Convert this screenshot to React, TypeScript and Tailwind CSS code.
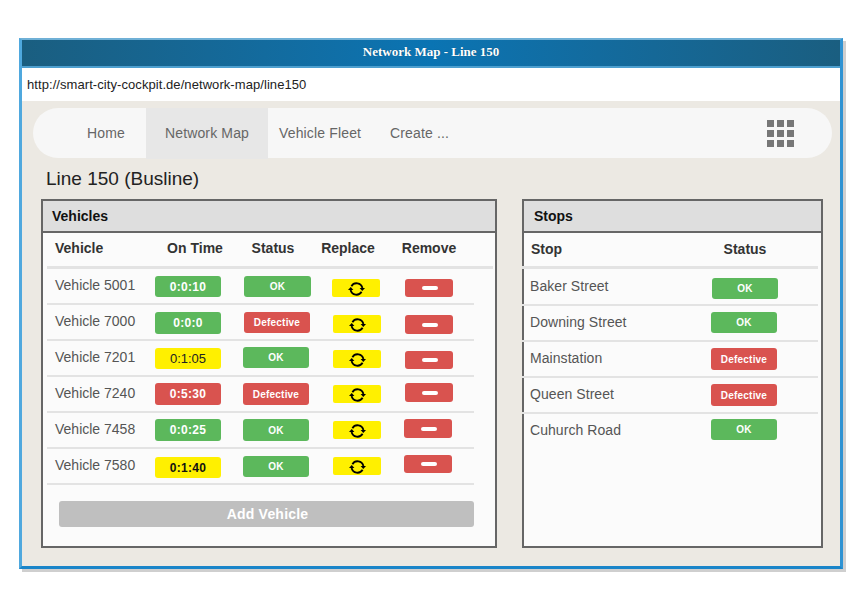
const GREEN = "bg-[#5cb85c]";
const RED = "bg-[#d9534f]";

const vehicles = [
  {
    name: "Vehicle 5001",
    time: "0:0:10",
    timeClass: "bg-[#5cb85c] text-white font-bold text-[12px] tracking-[0.3px] mt-[7px] h-[21px]",
    status: "OK",
    statusClass: "bg-[#5cb85c] ml-[23px] mt-[7px] w-[67px] h-[21px]",
    replaceClass: "ml-[21px] mt-[10px]",
    removeClass: "ml-[25px] mt-[10px] h-[18px]",
  },
  {
    name: "Vehicle 7000",
    time: "0:0:0",
    timeClass: "bg-[#5cb85c] text-white font-bold text-[12px] tracking-[0.3px] mt-[7px] h-[22px]",
    status: "Defective",
    statusClass: "bg-[#d9534f] ml-[23px] mt-[7px] w-[66px] h-[21px]",
    replaceClass: "ml-[23px] mt-[10px]",
    removeClass: "ml-[24px] mt-[10px] h-[19px]",
  },
  {
    name: "Vehicle 7201",
    time: "0:1:05",
    timeClass: "bg-[#fff000] text-[#222] text-[13px] mt-[7px] h-[21px]",
    status: "OK",
    statusClass: "bg-[#5cb85c] ml-[22px] mt-[6px] w-[66px] h-[21px]",
    replaceClass: "ml-[24px] mt-[9px]",
    removeClass: "ml-[24px] mt-[10px] h-[18px]",
  },
  {
    name: "Vehicle 7240",
    time: "0:5:30",
    timeClass: "bg-[#d9534f] text-white font-bold text-[12px] tracking-[0.3px] mt-[6px] h-[22px]",
    status: "Defective",
    statusClass: "bg-[#d9534f] ml-[22px] mt-[6px] w-[66px] h-[22px]",
    replaceClass: "ml-[24px] mt-[8px]",
    removeClass: "ml-[24px] mt-[6px] h-[19px]",
  },
  {
    name: "Vehicle 7458",
    time: "0:0:25",
    timeClass: "bg-[#5cb85c] text-white font-bold text-[12px] tracking-[0.3px] mt-[6px] h-[22px]",
    status: "OK",
    statusClass: "bg-[#5cb85c] ml-[22px] mt-[6px] w-[66px] h-[22px]",
    replaceClass: "ml-[24px] mt-[8px]",
    removeClass: "ml-[23px] mt-[6px] h-[19px]",
  },
  {
    name: "Vehicle 7580",
    time: "0:1:40",
    timeClass: "bg-[#fff000] text-[#111] font-bold text-[12px] tracking-[0.3px] mt-[8px] h-[21px]",
    status: "OK",
    statusClass: "bg-[#5cb85c] ml-[22px] mt-[7px] w-[66px] h-[21px]",
    replaceClass: "ml-[24px] mt-[8px]",
    removeClass: "ml-[23px] mt-[6px] h-[18px]",
  },
];

const stops = [
  { name: "Baker Street", status: "OK", rowClass: "h-[37px] border-b-2", nameClass: "pt-[7px]", chipClass: `${GREEN} ml-[182px] mt-[9px] h-[21px]` },
  { name: "Downing Street", status: "OK", rowClass: "h-[36px] border-b-2", nameClass: "pt-[6px]", chipClass: `${GREEN} ml-[181px] mt-[6px] h-[21px]` },
  { name: "Mainstation", status: "Defective", rowClass: "h-[36px] border-b-2", nameClass: "pt-[6px]", chipClass: `${RED} ml-[181px] mt-[6px] h-[22px]` },
  { name: "Queen Street", status: "Defective", rowClass: "h-[36px] border-b-2", nameClass: "pt-[6px]", chipClass: `${RED} ml-[181px] mt-[6px] h-[22px]` },
  { name: "Cuhurch Road", status: "OK", rowClass: "h-[36px]", nameClass: "pt-[6px]", chipClass: `${GREEN} ml-[181px] mt-[5px] h-[21px]` },
];

function RefreshIcon() {
  return (
    <svg width="17" height="16" viewBox="0 0 17 16" fill="none" className="mt-[1px]">
      <path d="M3.4 5.2A6 6 0 0 1 14.4 7" stroke="#000" strokeWidth="1.8" />
      <path d="M13.6 10.8A6 6 0 0 1 2.6 9" stroke="#000" strokeWidth="1.8" />
      <path d="M11.6 7h5.4l-2.7 3z" fill="#000" />
      <path d="M0 9h5.4l-2.7-3z" fill="#000" />
    </svg>
  );
}

function StatusChip({ label, className }: { label: string; className: string }) {
  return (
    <div className={`flex items-center justify-center rounded-[3px] text-white text-[10px] font-bold tracking-[0.2px] ${className}`}>
      {label}
    </div>
  );
}

function PanelTitle({ title, className }: { title: string; className: string }) {
  return (
    <div className={`h-[32px] shrink-0 bg-[#dedede] border-b-2 border-[#666] text-[14px] font-bold leading-[30px] text-[#111] ${className}`}>
      {title}
    </div>
  );
}

export default function App() {
  return (
    <div className="w-[854px] h-[604px] bg-white pt-[38px] pl-[19px] overflow-hidden font-['Liberation_Sans',Arial,sans-serif]">
      <div className="w-[824px] h-[531px] flex flex-col bg-[#ece9e3] border-[3px] border-t-2 border-t-[#6fb0d6] border-l-[#4fa8de] border-r-[#2f93d3] border-b-[#1a85c9] shadow-[3px_3px_0_#cfcfcf]">
        <div className="h-[28px] shrink-0 flex items-center justify-center pb-[2px] bg-gradient-to-r from-[#1a5e80] via-[#0a74b3] to-[#1a5e80] border-b-2 border-[#4d9fcf] text-white text-[13px] font-bold font-['Liberation_Serif',serif] [text-shadow:0_0_1px_#0005]">
          Network Map - Line 150
        </div>
        <div className="h-[33px] shrink-0 bg-white pl-[5px] text-[13px] leading-[34px] tracking-[0.07px] text-[#222]">
          http://smart-city-cockpit.de/network-map/line150
        </div>

        <div className="ml-[11px] mt-[7px] w-[799px] h-[50px] shrink-0 flex items-start rounded-[25px] bg-[#f7f7f7] text-[14px] tracking-[0.15px] text-[#666]">
          <div className="ml-[54px] w-[59px] leading-[50px]">Home</div>
          <div className="w-[122px] h-[51px] bg-[#e7e7e7] text-center leading-[50px]">Network Map</div>
          <div className="ml-[11px] w-[111px] leading-[50px]">Vehicle Fleet</div>
          <div className="leading-[50px]">Create ...</div>
          <div className="ml-[318px] mt-[12px] grid grid-cols-[7px_7px_7px] gap-[3px]">
            {[0, 1, 2, 3, 4, 5, 6, 7, 8].map((n) => (
              <div key={n} className="w-[7px] h-[7px] bg-[#777]" />
            ))}
          </div>
        </div>

        <div className="ml-[24px] mt-[8px] h-[26px] shrink-0 text-[19px] leading-[26px] text-[#222]">Line 150 (Busline)</div>

        <div className="ml-[19px] mt-[7px] flex gap-[25px]">
          <div className="w-[456px] h-[349px] flex flex-col border-2 border-[#666] bg-[#fbfbfb]">
            <PanelTitle title="Vehicles" className="pl-[9px]" />
            <div className="ml-[4px] w-[446px] h-[36px] shrink-0 flex items-start border-b-[3px] border-[#e3e3e3] text-[14px] font-bold leading-[30px] text-[#333]">
              <div className="ml-[8px] w-[95px]">Vehicle</div>
              <div className="w-[90px] text-center">On Time</div>
              <div className="w-[66px] text-center">Status</div>
              <div className="ml-[2px] w-[80px] text-center">Replace</div>
              <div className="w-[82px] text-center">Remove</div>
            </div>
            {vehicles.map((v) => (
              <div key={v.name} className="ml-[4px] w-[427px] h-[36px] shrink-0 flex items-start border-b-2 border-[#e3e3e3]">
                <div className="w-[108px] pl-[8px] pt-[6px] text-[14px] leading-5 text-[#555]">{v.name}</div>
                <div className={`w-[66px] flex items-center justify-center rounded-[3px] ${v.timeClass}`}>{v.time}</div>
                <StatusChip label={v.status} className={v.statusClass} />
                <div className={`w-[48px] h-[18px] flex items-center justify-center rounded-[2px] bg-[#fff000] ${v.replaceClass}`}>
                  <RefreshIcon />
                </div>
                <div className={`w-[48px] flex items-center justify-center rounded-[3px] bg-[#d9534f] ${v.removeClass}`}>
                  <div className="ml-[1px] w-[16px] h-[4px] rounded-[2px] bg-white" />
                </div>
              </div>
            ))}
            <div className="ml-[16px] mt-[16px] w-[415px] h-[26px] shrink-0 flex items-center justify-center pl-[2px] rounded-[3px] bg-[#bfbfbf] text-[14px] font-bold tracking-[0.2px] text-white">
              Add Vehicle
            </div>
          </div>

          <div className="w-[301px] h-[349px] flex flex-col border-2 border-[#666] bg-[#fbfbfb]">
            <PanelTitle title="Stops" className="pl-[10px]" />
            <div className="-ml-[2px] w-[296px] h-[36px] shrink-0 flex items-start border-b-[3px] border-[#e3e3e3] text-[14px] font-bold leading-[32px] text-[#333]">
              <div className="ml-[9px] w-[180px]">Stop</div>
              <div className="w-[68px] text-center">Status</div>
            </div>
            {stops.map((s) => (
              <div key={s.name} className={`-ml-[2px] w-[296px] shrink-0 flex items-start border-[#e3e3e3] ${s.rowClass}`}>
                <div className="w-[8px] shrink-0" />
                <div className={`w-[0px] whitespace-nowrap text-[14px] leading-5 tracking-[0.06px] text-[#555] ${s.nameClass}`}>{s.name}</div>
                <StatusChip label={s.status} className={`w-[66px] ${s.chipClass}`} />
              </div>
            ))}
          </div>
        </div>
      </div>
    </div>
  );
}
